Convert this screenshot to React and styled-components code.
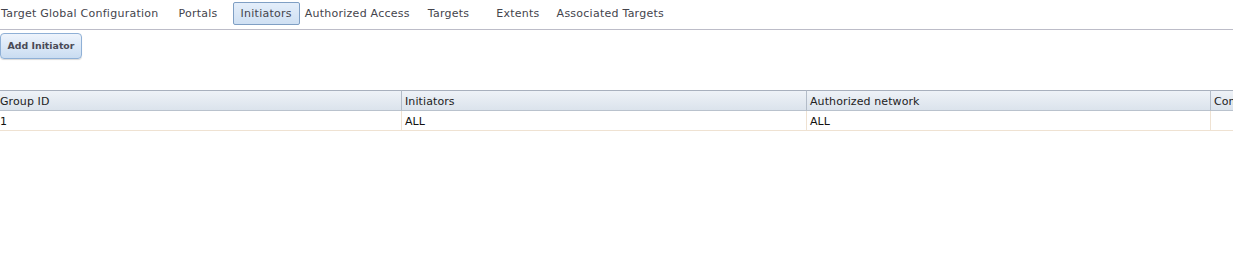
import React from "react";
import styled, { createGlobalStyle } from "styled-components";

const Global = createGlobalStyle`
  html, body { margin: 0; padding: 0; background: #fff; }
  body { font-family: "DejaVu Sans", Verdana, sans-serif; font-size: 11px; color: #333; }
`;

const Page = styled.div`
  width: 1233px;
  height: 280px;
  overflow: hidden;
  display: flex;
  flex-direction: column;
`;

const TabBar = styled.div`
  display: flex;
  align-items: center;
  border-bottom: 1px solid #bcbcc8;
  box-sizing: border-box;
  height: 30px;
  padding-bottom: 3px;
`;

const Tab = styled.div`
  margin-left: ${(p) => p.$gap}px;
  padding: 0 ${(p) => (p.$active ? 7 : 0)}px;
  height: 23px;
  display: flex;
  align-items: center;
  box-sizing: border-box;
  white-space: nowrap;
  letter-spacing: 0.25px;
  color: #44444c;
  border-radius: 2px;
  border: 1px solid ${(p) => (p.$active ? "#7f9fc4" : "transparent")};
  background: ${(p) => (p.$active ? "linear-gradient(#e4eefa, #cfe0f3)" : "transparent")};
`;

const Toolbar = styled.div`
  padding-top: 3px;
  height: 60px;
  box-sizing: border-box;
`;

const Button = styled.button`
  font-family: inherit;
  font-size: 9.4px;
  font-weight: bold;
  color: #4a4a55;
  height: 26px;
  width: 82px;
  padding: 0 0 1px;
  border: 1px solid #8fb0d6;
  border-radius: 4px;
  background: linear-gradient(#eef4fc, #c9dcf1);
  box-shadow: 0 1px 1px rgba(0,0,0,0.15);
`;

const Table = styled.div`
  display: grid;
  grid-template-columns: 401px 405px 404px 1fr;
`;

const HeadCell = styled.div`
  height: 21px;
  box-sizing: border-box;
  padding: 1px 0 0 ${(p) => (p.$first ? 0 : 3)}px;
  display: flex;
  align-items: center;
  white-space: nowrap;
  overflow: hidden;
  letter-spacing: 0.1px;
  color: #222;
  border-top: 1px solid #a8b0bd;
  border-bottom: 1px solid #b9c2cd;
  border-left: ${(p) => (p.$first ? "none" : "1px solid #b3bcc8")};
  background: linear-gradient(#eef2f7, #dbe3ec);
`;

const Cell = styled.div`
  height: 20px;
  box-sizing: border-box;
  padding: 1px 0 0 ${(p) => (p.$first ? 0 : 3)}px;
  display: flex;
  align-items: center;
  white-space: nowrap;
  overflow: hidden;
  color: #111;
  border-bottom: 1px solid #efe2d2;
  border-left: ${(p) => (p.$first ? "none" : "1px solid #efe2d2")};
`;

const tabs = [
  { label: "Target Global Configuration", gap: 0 },
  { label: "Portals", gap: 18 },
  { label: "Initiators", gap: 14, active: true },
  { label: "Authorized Access", gap: 4 },
  { label: "Targets", gap: 16 },
  { label: "Extents", gap: 25 },
  { label: "Associated Targets", gap: 15 },
];

const columns = ["Group ID", "Initiators", "Authorized network", "Comment"];
const rows = [["1", "ALL", "ALL", ""]];

export default function App() {
  return (
    <Page>
      <Global />
      <TabBar>
        {tabs.map((t) => (
          <Tab key={t.label} $gap={t.gap} $active={t.active}>
            {t.label}
          </Tab>
        ))}
      </TabBar>
      <Toolbar>
        <Button>Add Initiator</Button>
      </Toolbar>
      <Table>
        {columns.map((c, i) => (
          <HeadCell key={c} $first={i === 0}>{c}</HeadCell>
        ))}
        {rows.map((r, ri) =>
          r.map((v, i) => (
            <Cell key={ri + "-" + i} $first={i === 0}>{v}</Cell>
          ))
        )}
      </Table>
    </Page>
  );
}
